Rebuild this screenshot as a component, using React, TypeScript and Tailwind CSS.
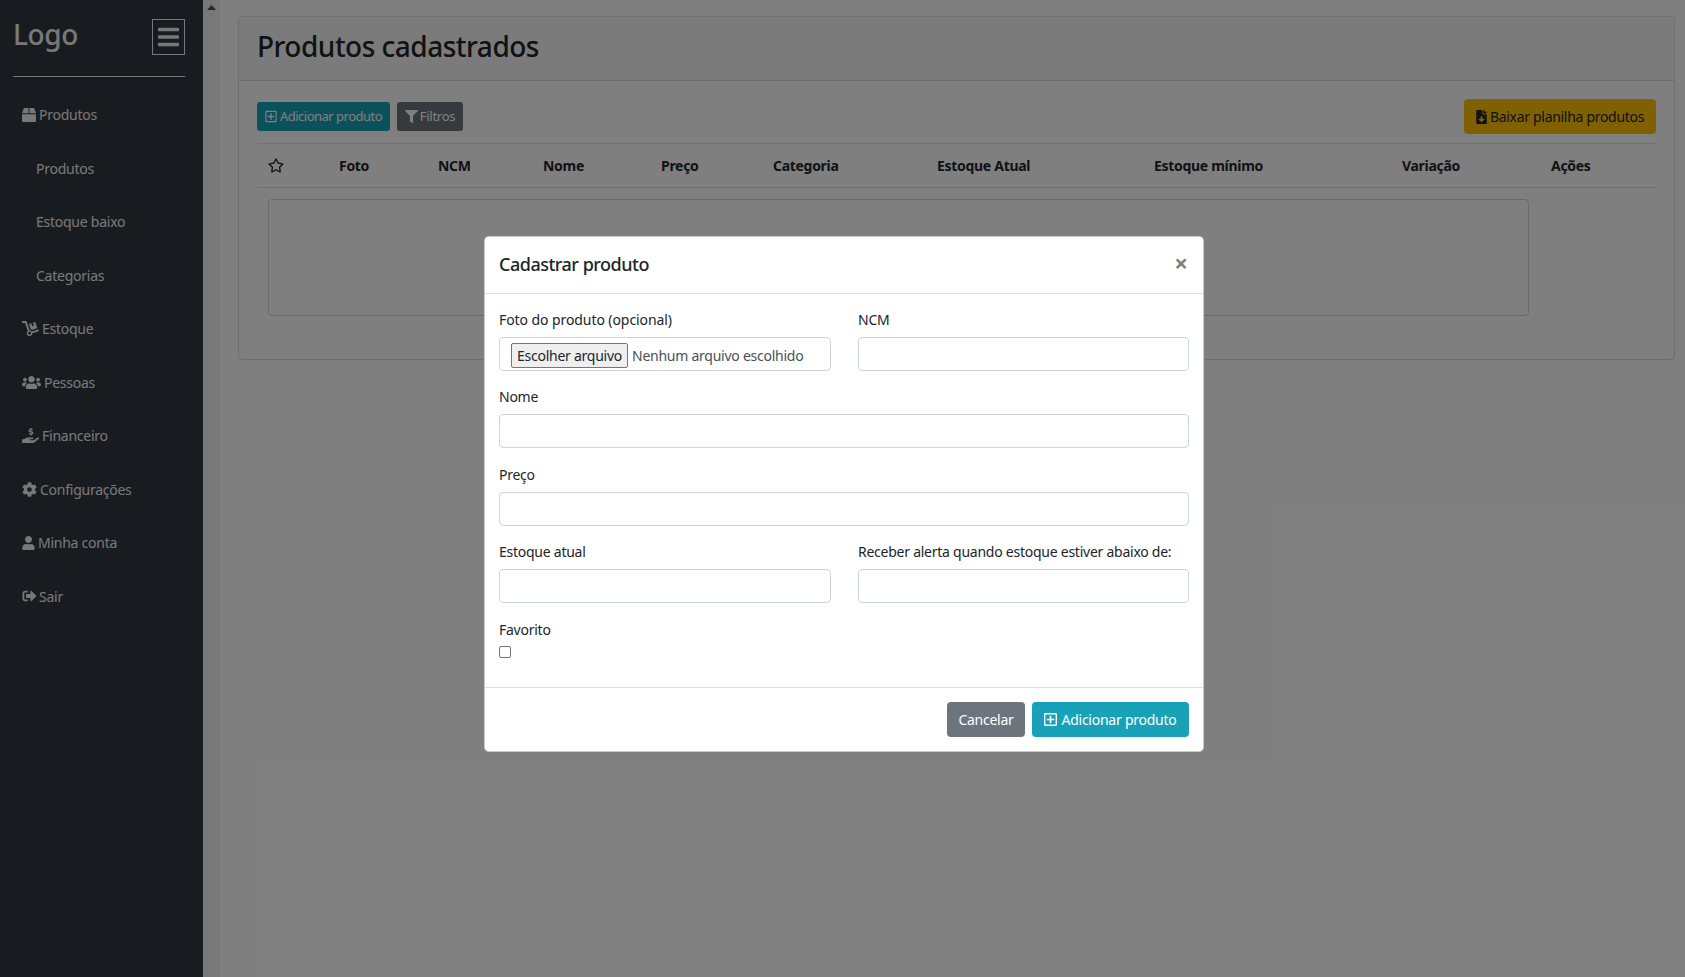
import React from "react";
import { FaBox, FaDolly, FaUsers, FaHandHoldingUsd, FaCog, FaUser, FaSignOutAlt, FaBars, FaRegPlusSquare, FaFilter, FaRegStar, FaFileDownload } from "react-icons/fa";

const font = { fontFamily: '"Noto Sans", sans-serif' };

function NavItem({ icon, label, gap = "gap-[3px]" }: { icon?: React.ReactNode; label: string; gap?: string }) {
  return (
    <div className={`h-[53.5px] flex items-center ${icon ? `pl-[22px] ${gap}` : "pl-[36px]"} text-[14px] tracking-[-0.25px] text-[#f0f0f0]`}>
      {icon}
      <span>{label}</span>
    </div>
  );
}

function Field({ label, labelClass = "tracking-[-0.25px]", children }: { label: string; labelClass?: string; children?: React.ReactNode }) {
  return (
    <div>
      <div className={`h-[21px] leading-[21px] mb-[7px] text-[14px] text-[#212529] ${labelClass}`}>{label}</div>
      {children ?? <div className="h-[34px] rounded-[4px] border border-[#ced4da] bg-white" />}
    </div>
  );
}

const cols = ["Foto", "NCM", "Nome", "Preço", "Categoria", "Estoque Atual", "Estoque mínimo", "Variação", "Ações"];

export default function App() {
  return (
    <div className="relative flex h-[977px] overflow-hidden bg-white" style={font}>
      <aside className="w-[203px] shrink-0 bg-[#31373f] pl-[13px] pr-[18px]">
        <div className="flex h-[76px] items-start justify-between pt-[19px]">
          <span className="text-[28px] font-medium leading-[30px] tracking-[-0.4px] text-[#f0f0f0]">Logo</span>
          <span className="flex h-[36px] w-[33px] items-center justify-center border border-[#f0f0f0] text-[#f0f0f0]">
            <FaBars className="h-[24px] w-[21px]" />
          </span>
        </div>
        <div className="h-px bg-[#f0f0f0]" />
        <nav className="-ml-[13px] -mr-[18px] mt-[11px]">
          <NavItem icon={<FaBox className="h-[14px] w-[14px]" />} label="Produtos" />
          <NavItem label="Produtos" />
          <NavItem label="Estoque baixo" />
          <NavItem label="Categorias" />
          <NavItem icon={<FaDolly className="h-[15px] w-[17px]" />} label="Estoque" />
          <NavItem icon={<FaUsers className="h-[15px] w-[19px]" />} label="Pessoas" />
          <NavItem icon={<FaHandHoldingUsd className="h-[15px] w-[17px]" />} label="Financeiro" />
          <NavItem icon={<FaCog className="h-[15px] w-[15px]" />} label="Configurações" />
          <NavItem icon={<FaUser className="h-[14px] w-[13px]" />} label="Minha conta" />
          <NavItem icon={<FaSignOutAlt className="h-[14px] w-[15px]" />} label="Sair" gap="gap-[2px]" />
        </nav>
      </aside>

      <div className="w-[17px] shrink-0 bg-[#f1f1f1] flex justify-center pt-[5px]">
        <svg width="9" height="5" viewBox="0 0 9 5"><path d="M4.5 0L9 5H0z" fill="#505050" /></svg>
      </div>

      <main className="flex-1 pl-[18px] pr-[10px] pt-[16px]">
        <section className="h-[344px] rounded-[4px] border border-[#dfdfdf] bg-white text-[#212529]">
          <header className="flex h-[64px] items-center border-b border-[#dfdfdf] bg-[#f7f7f7] pb-[6px] pl-[18px]">
            <h1 className="text-[28px] font-medium tracking-[-0.5px]">Produtos cadastrados</h1>
          </header>
          <div className="pl-[18px] pr-[18px]">
            <div className="flex h-[62px] items-center justify-between pt-[9px]">
              <div className="flex gap-[7px]">
                <button className="flex h-[29px] w-[133px] items-center justify-center gap-[3px] rounded-[3px] bg-[#17a2b8] text-[13px] tracking-[-0.5px] text-white">
                  <FaRegPlusSquare className="h-[13px] w-[12px]" />Adicionar produto
                </button>
                <button className="flex h-[29px] w-[66px] items-center justify-center gap-[2px] rounded-[3px] bg-[#6c757d] text-[13px] tracking-[-0.25px] text-white">
                  <FaFilter className="h-[13px] w-[13px]" />Filtros
                </button>
              </div>
              <button className="flex h-[35px] w-[192px] items-center justify-center gap-[3px] rounded-[4px] bg-[#ffc107] text-[14px] tracking-[-0.3px] text-[#212529]">
                <FaFileDownload className="h-[14px] w-[11px]" />Baixar planilha produtos
              </button>
            </div>
            <div className="grid h-[45px] grid-cols-[70px_99px_105px_118px_112px_164px_217px_248px_149px_117px] items-center border-y border-[#dee2e6] text-[14px] font-bold tracking-[-0.3px]">
              <span className="pl-[11px]"><FaRegStar className="h-[15px] w-[16px]" /></span>
              {cols.map((c) => (
                <span key={c} className="pl-[12px]">{c}</span>
              ))}
            </div>
            <div className="ml-[11px] mt-[11px] h-[117px] w-[1261px] rounded-[4px] border border-[#d4d4d4]" />
          </div>
        </section>
      </main>

      <div className="absolute inset-0 bg-black/50" />

      <div className="absolute left-[484px] top-[236px] w-[720px] rounded-[5px] border border-black/20 bg-white text-[#212529]">
        <div className="flex h-[57px] items-center justify-between border-b border-[#dee2e6] pb-[2px] pl-[14px] pr-[15px]">
          <h2 className="text-[18px] font-medium tracking-[-0.5px]">Cadastrar produto</h2>
          <span className="mb-[2px] text-[24px] font-bold leading-none text-[#7f7f7f]">×</span>
        </div>
        <div className="pl-[14px] pr-[15px] pt-[14.9px]">
          <div className="grid grid-cols-[332px_331px] gap-x-[27px] gap-y-[15.5px]">
            <Field label="Foto do produto (opcional)" labelClass="tracking-[-0.08px]">
              <div className="flex h-[34px] items-center rounded-[4px] border border-[#ced4da] bg-white pl-[11px] pt-[3px] text-[14px] tracking-[-0.25px]">
                <span className="flex h-[25px] w-[117px] items-center justify-center rounded-[2px] border border-[#767676] bg-[#efefef] text-[#212529]">Escolher arquivo</span>
                <span className="ml-[4px] text-[#495057]">Nenhum arquivo escolhido</span>
              </div>
            </Field>
            <Field label="NCM" />
            <div className="col-span-2"><Field label="Nome" /></div>
            <div className="col-span-2"><Field label="Preço" /></div>
            <Field label="Estoque atual" />
            <Field label="Receber alerta quando estoque estiver abaixo de:" />
            <div className="col-span-2">
              <div className="mb-[6px] h-[21px] text-[14px] leading-[21px] tracking-[-0.25px]">Favorito</div>
              <div className="h-[12px] w-[12px] rounded-[2px] border border-[#767676] bg-white" />
            </div>
          </div>
        </div>
        <div className="mt-[29.1px] flex h-[64px] items-center justify-end gap-[7px] border-t border-[#dee2e6] pr-[14px]">
          <button className="flex h-[35px] w-[78px] items-center justify-center rounded-[4px] bg-[#6c757d] text-[14px] tracking-[-0.25px] text-white">Cancelar</button>
          <button className="flex h-[35px] w-[157px] items-center justify-center gap-[4px] rounded-[4px] bg-[#17a2b8] text-[14px] tracking-[-0.25px] text-white">
            <FaRegPlusSquare className="h-[15px] w-[13px]" />Adicionar produto
          </button>
        </div>
      </div>
    </div>
  );
}
